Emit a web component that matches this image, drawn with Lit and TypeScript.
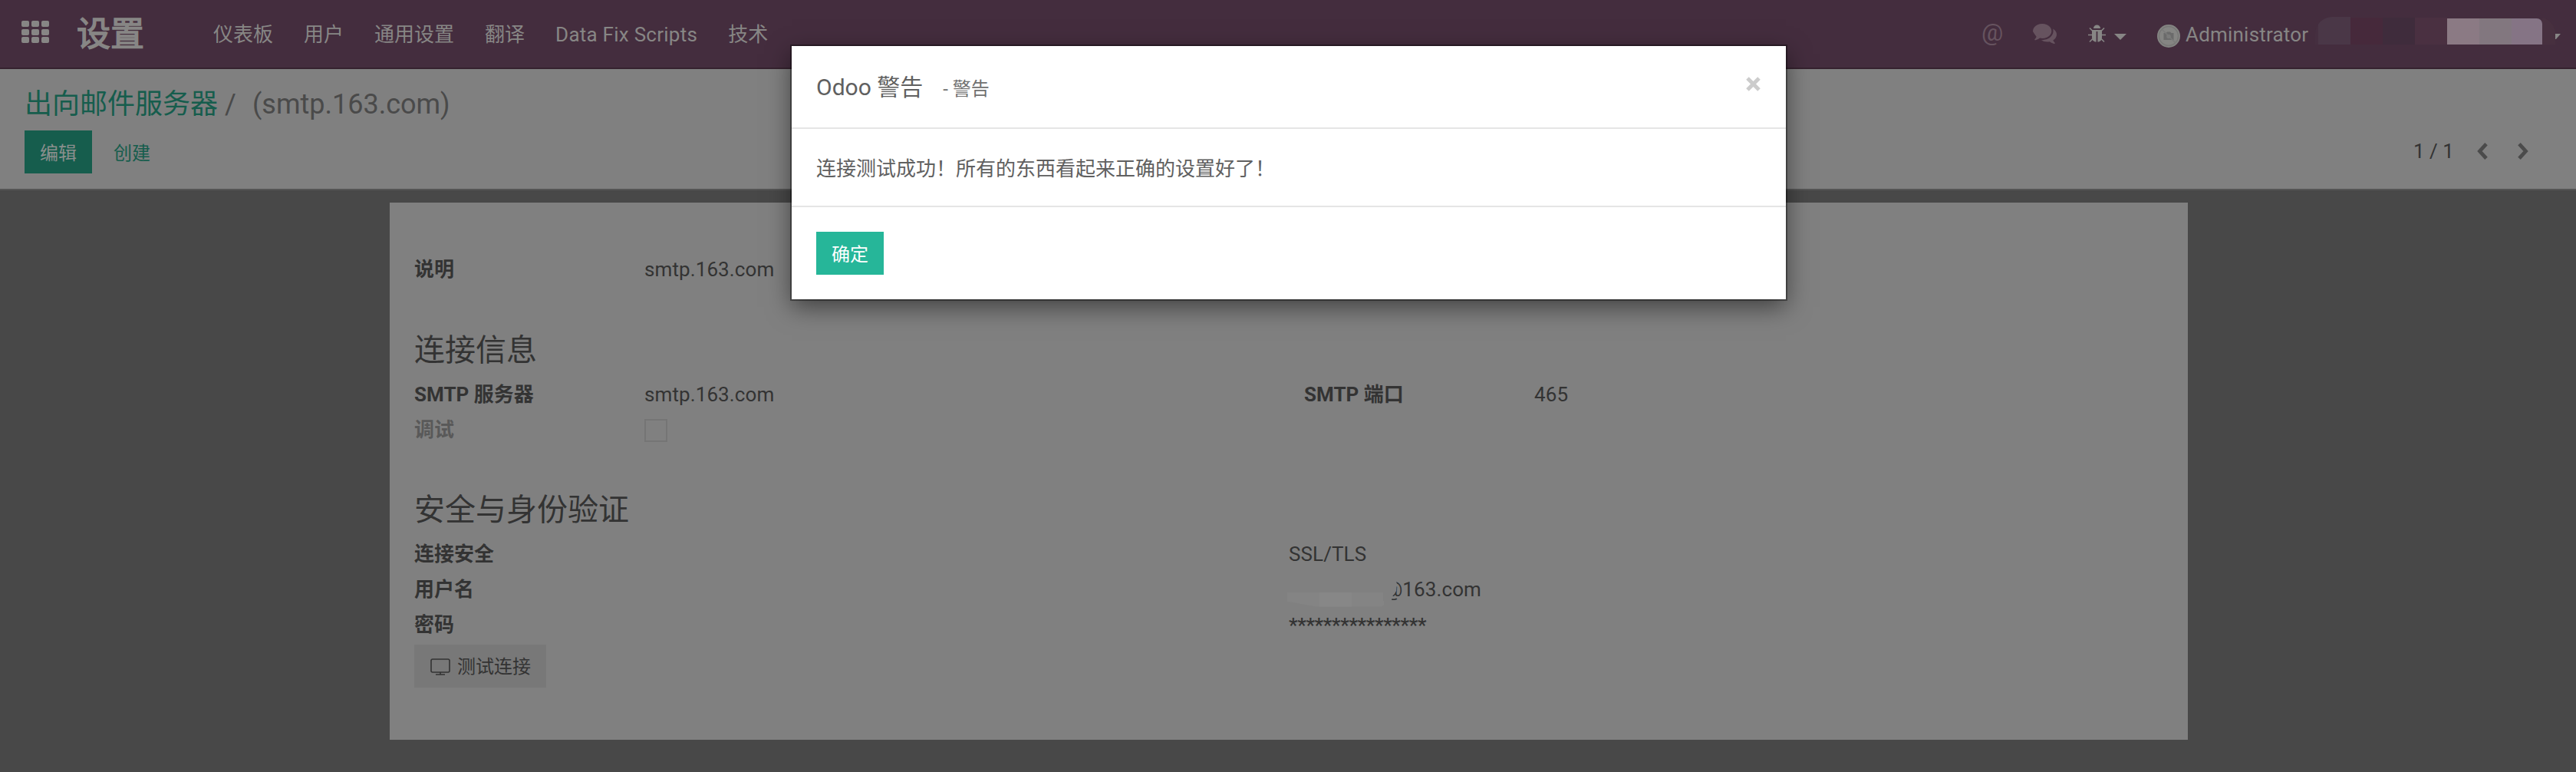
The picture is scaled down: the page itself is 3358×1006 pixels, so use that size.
import { LitElement, html, css } from "lit";
import { customElement } from "lit/decorators.js";

const FONT = css`Roboto, "Noto Sans CJK SC", sans-serif`;

@customElement("top-bar")
class TopBar extends LitElement {
  static styles = css`
    :host { display: flex; align-items: center; height: 88px; background: #442d3e; border-bottom: 2px solid #36222f; color: #878685; font: 26px/40px ${FONT}; box-sizing: content-box; }
    .apps { display: grid; grid-template-columns: repeat(3, 10px); grid-auto-rows: 8px; gap: 2.5px 3px; margin-left: 28px; margin-top: -5px; }
    .apps i { background: currentColor; border-radius: 2px; }
    .brand { font-size: 44px; -webkit-text-stroke: 1.5px currentColor; width: 178px; margin-left: 36px; padding-top: 2px; white-space: nowrap; }
    .menu { display: flex; gap: 40px; flex: 1; padding-top: 2px; }
    .menu span { white-space: nowrap; }
    .menu .latin { letter-spacing: 0.25px; }
    .sys { display: flex; align-items: center; }
    svg { display: block; flex: none; }
    .at { width: 28px; font-size: 31.5px; color: #66535f; line-height: 30px; margin-top: -3px; }
    .muted { color: #66535f; }
    .chat { margin-left: 39px; }
    .bug { margin-left: 41px; }
    .caret { margin-left: 11px; margin-top: 8px; }
    .avatar { margin-left: 40px; margin-top: 6px; }
    .user { margin-left: 7px; width: 169px; white-space: nowrap; letter-spacing: 0.2px; padding-top: 2px; }
    .mask { display: flex; align-items: flex-end; width: 313px; height: 36px; margin-top: -8px; border-radius: 22px 22px 0 0; overflow: hidden; background: #442d3e; }
    .tail { margin-top: 6px; margin-right: 20px; }
    .mask i { display: block; }
    .m0 { width: 4px; height: 36px; background: #452f40; }
    .m1 { width: 42px; height: 36px; background: #4a3747; }
    .m2 { width: 42px; height: 35px; background: #46293b; }
    .m3 { width: 42px; height: 35px; background: #3f2c3c; }
    .m4 { width: 42px; height: 35px; background: #4a3041; }
    .m5 { width: 42px; height: 34px; background: #8b7a84; }
    .m6 { width: 42px; height: 34px; background: #82777f; }
    .m7 { width: 40px; height: 34px; background: #857485; border-radius: 0 7px 0 0; }
    .m8 { width: 17px; height: 36px; background: #47303f; }
  `;
  render() {
    const items = ["仪表板", "用户", "通用设置", "翻译", "Data Fix Scripts", "技术"];
    return html`
      <div class="apps">${Array.from({ length: 9 }, () => html`<i></i>`)}</div>
      <div class="brand">设置</div>
      <div class="menu">${items.map((t) => html`<span class=${/[a-z]/.test(t) ? "latin" : "han"}>${t}</span>`)}</div>
      <div class="sys">
        <span class="at">@</span>
        <svg class="chat muted" width="31" height="26" viewBox="0 128 1792 1408" preserveAspectRatio="none"><path fill="currentColor" d="M1408 640q0 139-94 257t-256.500 186.500T704 1152q-86 0-176-16-124 88-278 128-36 9-86 16h-3q-11 0-20.500-8t-11.500-21q-1-3-1-6.500t.5-6.500 2-6l2.500-5 3.500-5.500 4-5 4.500-5 4-4.500q5-6 23-25t26-29.500 22.500-29 25-38.500 20.500-44Q142 880 71 777T0 640q0-139 94-257t256.500-186.500T704 128t353.500 68.500T1314 383t94 257zm384 256q0 120-71 224.500T1526 1293q10 24 20.500 44t25 38.500 22.500 29 26 29.500 23 25q1 1 4 4.500t4.500 5 4 5 3.500 5.500l2.500 5 2 6 .5 6.500-1 6.500q-3 14-13 22t-22 7q-50-7-86-16-154-40-278-128-90 16-176 16-271 0-472-132 58 4 88 4 161 0 309-45t264-129q125-92 192-212t67-254q0-77-23-152 129 71 204 178t75 230z"/></svg>
        <svg class="bug" width="23" height="24" viewBox="0 0 23 24"><g fill="none" stroke="currentColor" stroke-width="1.6"><path d="M2 4.500l4 4M21 4.500l-4 4M0 13.500h6M23 13.500h-6M2 22.500l4-4M21 22.500l-4-4"/></g><path fill="currentColor" d="M7 5a4.500 4.500 0 0 1 9 0zM5 7h13v10q0 4-4 5.500h-1.600V9h-1.800v13.500H9Q5 21 5 17z"/></svg>
        <svg class="caret" width="16" height="8"><path fill="currentColor" d="M0 0h16L8 8z"/></svg>
        <svg class="avatar" width="30" height="30" viewBox="0 0 30 30"><circle cx="15" cy="15" r="15" fill="#858583"/><circle cx="15" cy="15" r="12.500" fill="none" stroke="#777776" stroke-width="1.500"/><path fill="#6b6b6b" d="M8.500 11h3l1.500-1.500h4l1.500 1.500h3v9h-13z"/><circle cx="15" cy="15.500" r="2.800" fill="#7b7b7a"/><path d="M6 6l18 18" stroke="#7b7b7a" stroke-width="1.500"/></svg>
        <span class="user">Administrator</span>
        <div class="mask" aria-hidden="true">${[0, 1, 2, 3, 4, 5, 6, 7, 8].map((n) => html`<i class="m${n}"></i>`)}</div>
        <svg class="tail" width="7" height="7"><path fill="currentColor" d="M0 0h7L1 7H0z"/></svg>
      </div>`;
  }
}

@customElement("control-panel")
class ControlPanel extends LitElement {
  static styles = css`
    :host { display: flex; flex-direction: column; height: 156px; background: #808080; border-bottom: 2px solid #555; font: 24px/40px ${FONT}; color: #4a4a4a; }
    .crumb { display: flex; font-size: 36px; line-height: 50px; padding: 21px 0 0 32px; height: 59px; white-space: nowrap; }
    .link { color: #165d4d; }
    .slash { margin-left: 9px; width: 36px; }
    .row { display: flex; align-items: center; height: 56px; padding: 0 62px 0 32px; }
    .primary { width: 88px; height: 56px; line-height: 60px; text-align: center; background: #165d4d; color: #8a8f8d; margin-right: 28px; }
    .flat { color: #165d4d; flex: 1; line-height: 40px; padding-top: 3px; }
    .pager { color: #333; font-size: 26px; width: 83px; margin-top: -3px; white-space: nowrap; }
    svg { display: block; margin-top: -3px; color: #4b4b4b; }
    .next { margin-left: 39px; }
  `;
  render() {
    return html`
      <div class="crumb"><span class="link">出向邮件服务器</span><span class="slash">/</span><span>(smtp.163.com)</span></div>
      <div class="row">
        <span class="primary">编辑</span><span class="flat">创建</span>
        <span class="pager">1 / 1</span>
        <svg width="14" height="22" fill="none" stroke="currentColor" stroke-width="4.800"><path d="M12 1.700L3.500 11l8.500 9.300"/></svg>
        <svg class="next" width="14" height="22" fill="none" stroke="currentColor" stroke-width="4.800"><path d="M2 1.700L10.500 11L2 20.300"/></svg>
      </div>`;
  }
}

@customElement("form-sheet")
class FormSheet extends LitElement {
  static styles = css`
    :host { display: flex; flex-direction: column; box-sizing: border-box; width: 2344px; height: 700px; background: #808080; padding: 64px 32px 0; font: 26px/46px ${FONT}; color: #333; }
    .row { display: grid; grid-template-columns: 300px 860px 300px 1fr; height: 46px; white-space: nowrap; }
    .half { grid-template-columns: 1140px 1fr; }
    b { font-weight: 700; }
    .off { color: #595959; }
    h2 { font-size: 40px; font-weight: 400; line-height: 56px; height: 56px; margin: 55px 0 6px; }
    .second { margin-top: 54px; }
    .box { width: 26px; height: 30px; box-sizing: border-box; width: 30px; border: 2px solid #757575; margin-top: 9px; }
    .mail { display: flex; align-items: center; }
    .mask { display: flex; width: 126px; height: 19px; margin: 26px 0 0 -2px; clip-path: polygon(0 0, 100% 0, 100% 90%, 97% 100%, 30% 100%, 0 65%); }
    .mask i { width: 42px; background: #848484; }
    .mask .mid { background: #878787; }
    .at { position: relative; }
    .at::before { content: ""; position: absolute; left: -2px; top: 6px; width: 18px; height: 32px; background: #808080; clip-path: polygon(0 0, 80% 0, 100% 30%, 95% 60%, 70% 80%, 60% 100%, 0 100%); }
    .gap { width: 1px; }
    .value { letter-spacing: 0.1px; }
    .stars { padding-top: 1px; font-weight: 500; letter-spacing: -0.33px; }
    .btn { display: flex; align-items: center; box-sizing: border-box; width: 172px; height: 56px; margin-top: 3px; padding: 1px 0 0 21px; background: #787878; font-size: 24px; gap: 9px; white-space: nowrap; }
  `;
  render() {
    return html`
      <div class="row"><b>说明</b><span class="value">smtp.163.com</span></div>
      <h2>连接信息</h2>
      <div class="row"><b>SMTP 服务器</b><span class="value">smtp.163.com</span><b>SMTP 端口</b><span class="value">465</span></div>
      <div class="row"><b class="off">调试</b><span class="box"></span></div>
      <h2 class="second">安全与身份验证</h2>
      <div class="row half"><b>连接安全</b><span class="value">SSL/TLS</span></div>
      <div class="row half"><b>用户名</b><span class="mail"><span class="mask"><i></i><i class="mid"></i><i></i></span><span class="gap"></span><span class="at">@</span><span class="value">163.com</span></span></div>
      <div class="row half"><b>密码</b><span class="stars">****************</span></div>
      <div class="btn"><svg width="26" height="24" viewBox="0 0 26 24" fill="none" stroke="currentColor" stroke-width="1.600"><rect x="1" y="2" width="24" height="17" rx="2"/><path d="M13 19v3M7 22h12"/></svg>测试连接</div>`;
  }
}

@customElement("warning-dialog")
class WarningDialog extends LitElement {
  static styles = css`
    :host { display: block; width: 1296px; height: 330px; background: #fff; color: #606060; font: 26px/40px ${FONT}; box-shadow: 0 0 0 2px rgba(0, 0, 0, 0.35), 0 10px 30px rgba(0, 0, 0, 0.5); }
    .head { display: flex; align-items: center; box-sizing: border-box; height: 108px; padding: 2px 33px 0 32px; border-bottom: 2px solid #e5e5e5; font-size: 30px; white-space: nowrap; }
    .small { font-size: 24px; color: #707070; margin-left: 26px; flex: 1; padding-top: 3px; }
    .x { display: block; margin-top: -10px; }
    .body { box-sizing: border-box; height: 102px; padding: 32px 32px 0; border-bottom: 2px solid #e5e5e5; }
    .foot { padding: 32px; }
    .ok { width: 88px; height: 56px; line-height: 60px; background: #26b699; color: #fff; font-size: 24px; text-align: center; }
  `;
  render() {
    return html`
      <div class="head"><span>Odoo 警告</span><span class="small">- 警告</span><svg class="x" width="19" height="19" fill="none" stroke="#ccc" stroke-width="5"><path d="M2 2l15 15M17 2L2 17"/></svg></div>
      <div class="body">连接测试成功！所有的东西看起来正确的设置好了！</div>
      <div class="foot"><div class="ok">确定</div></div>`;
  }
}

@customElement("app-root")
class AppRoot extends LitElement {
  static styles = css`
    :host { display: block; position: relative; width: 3358px; height: 1006px; overflow: hidden; background: #484848; }
    .sheet { margin: 16px 0 0 508px; }
    .dialog { position: absolute; left: 1032px; top: 60px; }
  `;
  render() {
    return html`<top-bar></top-bar><control-panel></control-panel><form-sheet class="sheet"></form-sheet><warning-dialog class="dialog"></warning-dialog>`;
  }
}
